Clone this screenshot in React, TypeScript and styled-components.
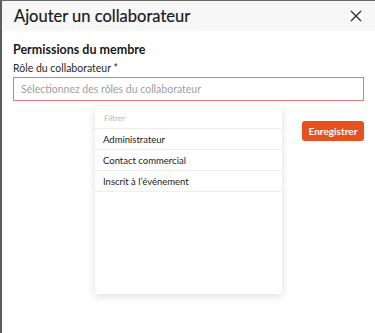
import * as React from 'react'
import styled, { createGlobalStyle } from 'styled-components'

const GlobalStyle = createGlobalStyle`
  html, body {
    margin: 0;
    padding: 0;
    background: #ffffff;
  }
  body {
    font-family: Lato, "Open Sans", Arial, sans-serif;
    color: #222;
  }
`

const Frame = styled.div`
  height: 333px;
  box-sizing: border-box;
  border-left: 2px solid #5c5c5c;
  border-top: 1px solid #6a6a6a;
  display: flex;
  flex-direction: column;
  background: #fff;
`

const Header = styled.div`
  height: 30px;
  background: #f7f7f7;
  display: flex;
  align-items: center;
  justify-content: space-between;
  padding: 0 12px 0 12px;
`

const Title = styled.h1`
  margin: 0;
  font-size: 16.5px;
  font-weight: 400;
  color: #1a1a1a;
  -webkit-text-stroke: 0.2px #1a1a1a;
`

const CloseButton = styled.button`
  border: 0;
  background: transparent;
  padding: 0;
  width: 14px;
  height: 14px;
  display: flex;
  align-items: center;
  justify-content: center;
  cursor: pointer;
`

const Body = styled.div`
  padding: 11px 11px 0 11px;
  display: flex;
  flex-direction: column;
`

const SectionTitle = styled.h2`
  margin: 0;
  font-size: 12.5px;
  font-weight: 700;
  color: #1a1a1a;
  line-height: 16px;
`

const Field = styled.div`
  position: relative;
  margin-top: 3px;
`

const Label = styled.label`
  display: block;
  font-size: 10.5px;
  color: #2a2a2a;
  line-height: 14px;
  margin-bottom: 2px;
`

const SelectBox = styled.div`
  height: 24px;
  box-sizing: border-box;
  border: 1px solid #e8747a;
  display: flex;
  align-items: center;
  padding: 0 7px;
  font-size: 10.5px;
  color: #a0a0a0;
`

const Menu = styled.div`
  position: absolute;
  top: 46px;
  left: 82px;
  width: 187px;
  height: 187px;
  background: #fff;
  box-shadow: 0 2px 8px rgba(0, 0, 0, 0.14);
  z-index: 2;
`

const FilterRow = styled.div`
  height: 22px;
  box-sizing: border-box;
  border-bottom: 1px solid #ececec;
  display: flex;
  align-items: center;
  padding: 0 9px;
  font-size: 8.5px;
  font-style: italic;
  color: #b5b5b5;
`

const Option = styled.div`
  height: 21px;
  box-sizing: border-box;
  border-bottom: 1px solid #efefef;
  display: flex;
  align-items: center;
  padding: 0 8px;
  font-size: 9.5px;
  color: #222;
`

const Footer = styled.div`
  display: flex;
  justify-content: flex-end;
  margin-top: 20px;
`

const SaveButton = styled.button`
  height: 20px;
  width: 62px;
  border: 0;
  border-radius: 3px;
  background: #e6511f;
  color: #fff;
  font-family: Lato, Arial, sans-serif;
  font-weight: 700;
  font-size: 10px;
  padding: 0;
  cursor: pointer;
`

const roles = ['Administrateur', 'Contact commercial', 'Inscrit à l’événement']

export default function App() {
  return (
    <Frame>
      <GlobalStyle />
      <Header>
        <Title>Ajouter un collaborateur</Title>
        <CloseButton aria-label="Fermer">
          <svg width="12" height="12" viewBox="0 0 12 12">
            <path d="M1 1L11 11M11 1L1 11" stroke="#333" strokeWidth="1.4" />
          </svg>
        </CloseButton>
      </Header>
      <Body>
        <SectionTitle>Permissions du membre</SectionTitle>
        <Field>
          <Label>Rôle du collaborateur *</Label>
          <SelectBox>Sélectionnez des rôles du collaborateur</SelectBox>
          <Menu>
            <FilterRow>Filtrer</FilterRow>
            {roles.map((r) => (
              <Option key={r}>{r}</Option>
            ))}
          </Menu>
        </Field>
        <Footer>
          <SaveButton>Enregistrer</SaveButton>
        </Footer>
      </Body>
    </Frame>
  )
}
